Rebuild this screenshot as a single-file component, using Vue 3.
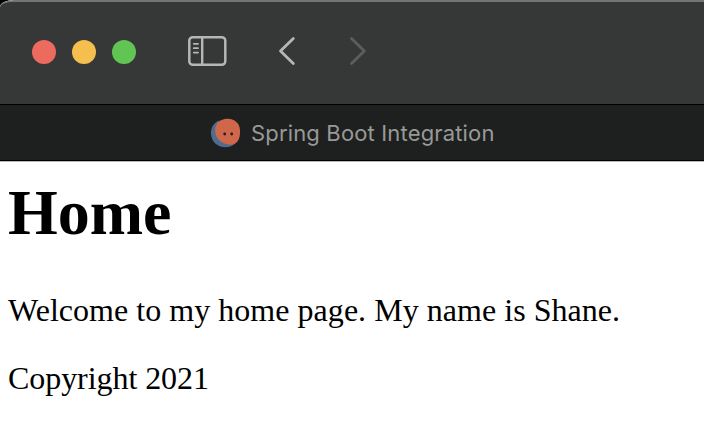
<script setup>
const lights = ['close', 'minimize', 'zoom']
const tabTitle = 'Spring Boot Integration'
</script>

<template>
  <div class="window">
    <header class="toolbar">
      <div class="lights">
        <span v-for="l in lights" :key="l" class="light" :class="l"></span>
      </div>
      <svg class="sidebar" width="40" height="32" viewBox="0 0 40 32" fill="none" stroke="#b5b6b5" stroke-linecap="round">
        <rect x="2.3" y="2.2" width="36" height="27.6" rx="3.6" stroke-width="2.5" />
        <path d="M15.2 2.5V29.5" stroke-width="2.4" stroke-linecap="butt" />
        <path d="M6.8 8.8H11M6.8 13.2H11M6.8 17.6H11" stroke-width="1.8" />
      </svg>
      <svg class="back" width="20" height="32" viewBox="0 0 20 32" fill="none" stroke="#b5b6b5" stroke-width="2.8" stroke-linecap="round" stroke-linejoin="round">
        <path d="M16.3 3.4L3.5 16L16.3 28.6" />
      </svg>
      <svg class="forward" width="20" height="32" viewBox="0 0 20 32" fill="none" stroke="#5c5e5d" stroke-width="2.8" stroke-linecap="round" stroke-linejoin="round">
        <path d="M3.5 3.4L16.3 16L3.5 28.6" />
      </svg>
    </header>
    <div class="tabbar">
      <svg class="favicon" width="32" height="32" viewBox="0 0 32 32">
        <path d="M9 3.6C3.5 6 .9 11 1 16.5C1.2 24.5 7.5 30.3 15.5 30.3C19.5 30.3 22.8 28.8 25 26.5L14 21Z" fill="#4d6c8e" />
        <path d="M16.3 1.8C21.5 1 25.8 3.2 28.2 7C30.4 10.5 30.6 17 29.2 21C27.8 25 25 27.7 20.8 27.7C15.5 27.7 10.3 25 7.5 21C4.7 17 4.5 11.8 6.3 8C8.2 4 11.8 2.4 16.3 1.8Z" fill="#cf674a" />
        <circle cx="14.7" cy="17" r="1.4" fill="#251d1b" />
        <circle cx="21.7" cy="17" r="1.4" fill="#251d1b" />
      </svg>
      <span class="title">{{ tabTitle }}</span>
    </div>
    <main class="page">
      <h1>Home</h1>
      <p class="welcome">Welcome to my home page. My name is Shane.</p>
      <p class="copyright">Copyright 2021</p>
    </main>
  </div>
</template>

<style>
body {
  background: #000;
}
</style>

<style scoped>
.window {
  width: 704px;
  height: 446px;
  box-sizing: border-box;
  background: #fff;
  border-top-left-radius: 14px 7px;
  overflow: hidden;
}
.toolbar {
  box-sizing: border-box;
  height: 105px;
  display: flex;
  align-items: center;
  padding: 0 0 4px 32px;
  background: #363837;
  border-top: 2px solid #737574;
  border-bottom: 1px solid #000;
  border-top-left-radius: 14px 7px;
}
.lights {
  display: flex;
  gap: 16px;
  padding-top: 2px;
}
.light {
  width: 24px;
  height: 24px;
  border-radius: 50%;
}
.close { background: #ed6a5e; }
.minimize { background: #f5bf4f; }
.zoom { background: #61c554; }
.sidebar { margin-left: 51px; }
.back { margin-left: 50px; }
.forward { margin-left: 51px; }
.tabbar {
  box-sizing: border-box;
  height: 56px;
  display: flex;
  align-items: center;
  padding-left: 210px;
  background: #1e201f;
  border-bottom: 1px solid #000;
}
.title {
  margin-left: 9px;
  font: 22px/28px Inter, sans-serif;
  letter-spacing: 0.16px;
  color: #989998;
  white-space: nowrap;
}
.page {
  padding: 14px 8px 0;
  border-top: 1px solid #b9b9b9;
  color: #000;
  font: 32px/36px "Liberation Serif", serif;
}
h1 {
  margin: 0;
  font-size: 64px;
  line-height: 74px;
}
p {
  margin: 0 0 32px;
}
h1 + p {
  margin-top: 42px;
}
.welcome { letter-spacing: 0.035px; }
.copyright { letter-spacing: -0.06px; }
</style>
